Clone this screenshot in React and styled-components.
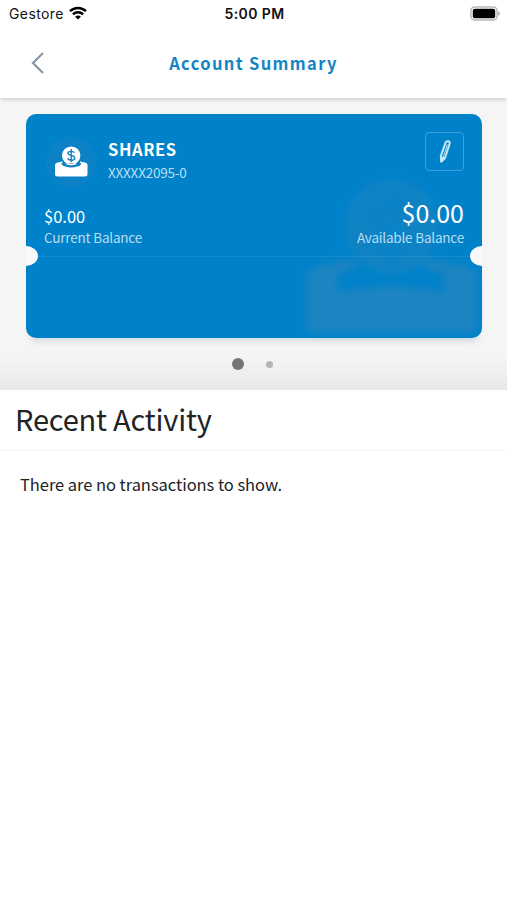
import React from "react";
import styled, { createGlobalStyle } from "styled-components";

const BLUE = "#0082ca";
const PAGE_GRAY = "#f5f5f5";

const GlobalStyle = createGlobalStyle`
  * {
    box-sizing: border-box;
  }

  body {
    margin: 0;
    background: white;
    color: #212326;
    font-family: "Noto Sans CJK SC", "Noto Sans", sans-serif;
  }
`;

const Screen = styled.div`
  width: 100%;
  height: 900px;
  overflow: hidden;
  background: white;
`;

const StatusBar = styled.div`
  display: grid;
  grid-template-columns: 1fr auto 1fr;
  align-items: center;
  height: 28px;
  padding: 0 7px 0 9px;
  color: #111;
  font-family: Inter, "Liberation Sans", sans-serif;
  font-size: 14px;
  line-height: 28px;
`;

const Carrier = styled.div`
  display: flex;
  align-items: center;
  gap: 5px;
  letter-spacing: 0.4px;

  svg {
    margin-top: -2px;
  }
`;

const Clock = styled.div`
  font-weight: 600;
  letter-spacing: 0.4px;
`;

const Battery = styled.svg`
  justify-self: end;
  margin-top: -2px;
`;

const Header = styled.header`
  position: relative;
  z-index: 1;
  display: grid;
  grid-template-columns: 80px 1fr 80px;
  align-items: center;
  height: 70px;
  background: white;
  box-shadow: 0 3px 4px -1px rgba(0, 20, 20, 0.16);
`;

const BackButton = styled.button`
  display: flex;
  padding: 0 0 0 30px;
  border: 0;
  background: none;
`;

const Title = styled.h1`
  margin: 0;
  color: #1584c6;
  font-size: 16.5px;
  font-weight: 600;
  letter-spacing: 1.35px;
  line-height: 69px;
  text-align: center;
`;

const Carousel = styled.section`
  height: 292px;
  padding: 16px 25px 0 26px;
  background: linear-gradient(${PAGE_GRAY} 89%, #e8e8e8);
`;

const Card = styled.article`
  position: relative;
  display: flex;
  flex-direction: column;
  height: 224px;
  border-radius: 10px;
  background: ${BLUE};
  color: white;
  box-shadow: 0 8px 6px -4px rgba(60, 80, 100, 0.14);
`;

const Watermark = styled.svg`
  position: absolute;
  right: 2px;
  bottom: 2px;
  filter: blur(3px);
`;

const CardTop = styled.div`
  position: relative;
  display: flex;
  height: 143px;
  flex-direction: column;
  justify-content: space-between;
  padding: 18px 18px 9px;
  border-bottom: 1px solid rgba(255, 255, 255, 0.08);
`;

const AccountRow = styled.div`
  display: flex;
`;

const AccountIcon = styled.div`
  display: flex;
  align-items: center;
  justify-content: center;
  width: 50px;
  height: 50px;
  margin: 5px 12px 0 2px;
  border-radius: 50%;
  background: #0d81c5;
`;

const AccountInfo = styled.div`
  flex: 1;
  padding-top: 5px;
`;

const AccountName = styled.h2`
  margin: 0;
  font-size: 16.5px;
  font-weight: 600;
  letter-spacing: 0.6px;
  line-height: 24px;
`;

const AccountNumber = styled.div`
  color: #b9def3;
  font-size: 13.5px;
  letter-spacing: -0.2px;
  line-height: 22px;
`;

const EditButton = styled.button`
  display: flex;
  align-items: center;
  justify-content: center;
  width: 39px;
  height: 39px;
  padding: 0;
  border: 1px solid #3a9fdb;
  border-radius: 4px;
  background: none;
`;

const Balances = styled.div`
  display: flex;
  align-items: flex-end;
  justify-content: space-between;
`;

const Balance = styled.div`
  text-align: ${props => (props.$large ? "right" : "left")};
`;

const Amount = styled.div`
  font-size: ${props => (props.$large ? "25px" : "16.5px")};
  line-height: ${props => (props.$large ? "30px" : "22px")};
`;

const BalanceLabel = styled.div`
  color: #b9def3;
  font-size: 13.5px;
  letter-spacing: -0.2px;
  line-height: 20px;
`;

const Notch = styled.span`
  position: absolute;
  top: 132px;
  ${props => props.$side}: -1px;
  width: 13px;
  height: 20px;
  border-radius: ${props => (props.$side === "left" ? "0 12px 12px 0 / 0 10px 10px 0" : "12px 0 0 12px / 10px 0 0 10px")};
  background: #f9f9f9;
`;

const Dots = styled.div`
  display: flex;
  align-items: center;
  justify-content: center;
  gap: 22px;
  height: 52px;
  padding-right: 4px;
`;

const Dot = styled.span`
  width: ${props => (props.$active ? "12px" : "7px")};
  height: ${props => (props.$active ? "12px" : "7px")};
  border-radius: 50%;
  background: ${props => (props.$active ? "#757575" : "#b5b5b5")};
`;

const SectionTitle = styled.h2`
  height: 61px;
  margin: 0;
  padding-left: 15px;
  border-bottom: 1px solid #f3f3f3;
  font-size: 29px;
  font-weight: 400;
  letter-spacing: -0.2px;
  line-height: 57px;
`;

const EmptyMessage = styled.p`
  margin: 0;
  padding: 19px 20px;
  font-size: 16.5px;
  letter-spacing: -0.05px;
  line-height: 28px;
`;

const WifiIcon = () => (
  <svg width="18" height="14" viewBox="0 0 18 14" fill="none" stroke="#000" strokeWidth="2.5">
    <path d="M1 5.2C5.5 .8 12.5.8 17 5.2" />
    <path d="M3.9 8.4C6.8 5.6 11.2 5.6 14.1 8.4" />
    <path d="M6.1 10.7C7.8 9.2 10.2 9.2 11.9 10.7L9 13.6Z" fill="#000" stroke="none" />
  </svg>
);

const BatteryIcon = () => (
  <Battery width="30" height="15" viewBox="0 0 30 15">
    <rect x=".9" y=".9" width="26.2" height="13.2" rx="4" fill="white" stroke="#b8b8b8" strokeWidth="1.5" />
    <rect x="2.8" y="2.8" width="22.4" height="9.4" rx="2" fill="#000" />
    <path d="M28.2 5.2Q30 6 30 7.5T28.2 9.8Z" fill="#b0b0b0" />
  </Battery>
);

const BackIcon = () => (
  <svg width="15" height="24" viewBox="0 0 15 24" fill="none" stroke="#8b98a8" strokeWidth="2.3">
    <path d="M13 2L3 12L13 22" />
  </svg>
);

const SharesIcon = () => (
  <svg width="34" height="32" viewBox="0 0 34 32">
    <path d="M1 19Q1 17 4 16.5L8.5 15.5V19Q17 21.5 26 19V15.5L30.5 16.5Q33.5 17 33.5 19V28Q33.5 30.5 31 30.5H3.5Q1 30.5 1 28Z" fill="white" />
    <path d="M7 17.5Q9 20.5 11.5 20.5Q17 22.5 23 20.5Q26 20.5 27.5 17.5L23 15.5H12Z" fill="#1481c2" />
    <circle cx="17.2" cy="9.6" r="9.2" fill="white" />
    <path d="M12.5 17.5Q17 19.5 22 17.5" stroke="white" strokeWidth="1.5" />
    <path d="M20.5 6.7C19.5 5.2 13.9 4.4 13.9 7.3C13.9 10 20.8 8.8 20.8 12C20.8 15.1 14.7 14.7 13.5 12.4M17.2 3V16.3" fill="none" stroke="#1481c2" strokeWidth="1.4" />
  </svg>
);

const PencilIcon = () => (
  <svg width="14" height="26" viewBox="0 0 14 26" fill="none" stroke="#c5e6f8" strokeWidth="2" strokeLinejoin="round">
    <path d="M7.7 3.2Q8.5 1.8 10.3 2.3Q12 2.8 11.7 4.5L7.2 18.5L3.3 22.5L2.8 17.2Z" />
    <path d="M9.3 5.5L5.3 18" strokeWidth="1" />
    <path d="M3 18.5L6.5 19.5L3.3 22.5Z" fill="#c5e6f8" />
  </svg>
);

const SharesWatermark = () => (
  <Watermark width="176" height="164" viewBox="0 0 176 164">
    <g fill="#1b84c1">
      <circle cx="88" cy="55" r="47" opacity=".6" />
      <path d="M110 42Q102 30 88 33C62 37 63 53 88 57C112 61 112 78 88 79Q72 79 64 69M89 20V90" fill="none" stroke={BLUE} strokeWidth="8" opacity=".35" />
      <path d="M2 108Q2 97 13 94L42 87Q49 86 54 94L34 102V120Q88 108 139 120V102L116 94Q121 87 132 88L161 94Q173 97 173 106V152Q173 161 163 161H14Q2 161 2 152Z" />
    </g>
  </Watermark>
);

export default function App() {
  return (
    <>
      <GlobalStyle />
      <Screen>
        <StatusBar>
          <Carrier>
            Gestore
            <WifiIcon />
          </Carrier>
          <Clock>5:00 PM</Clock>
          <BatteryIcon />
        </StatusBar>

        <Header>
          <BackButton aria-label="Back">
            <BackIcon />
          </BackButton>
          <Title>Account Summary</Title>
        </Header>

        <Carousel>
          <Card>
            <SharesWatermark />
            <CardTop>
              <AccountRow>
                <AccountIcon>
                  <SharesIcon />
                </AccountIcon>
                <AccountInfo>
                  <AccountName>SHARES</AccountName>
                  <AccountNumber>XXXXX2095-0</AccountNumber>
                </AccountInfo>
                <EditButton aria-label="Edit">
                  <PencilIcon />
                </EditButton>
              </AccountRow>

              <Balances>
                <Balance>
                  <Amount>$0.00</Amount>
                  <BalanceLabel>Current Balance</BalanceLabel>
                </Balance>
                <Balance $large>
                  <Amount $large>$0.00</Amount>
                  <BalanceLabel>Available Balance</BalanceLabel>
                </Balance>
              </Balances>
            </CardTop>
            <Notch $side="left" />
            <Notch $side="right" />
          </Card>
          <Dots>
            <Dot $active />
            <Dot />
          </Dots>
        </Carousel>

        <SectionTitle>Recent Activity</SectionTitle>
        <EmptyMessage>There are no transactions to show.</EmptyMessage>
      </Screen>
    </>
  );
}
